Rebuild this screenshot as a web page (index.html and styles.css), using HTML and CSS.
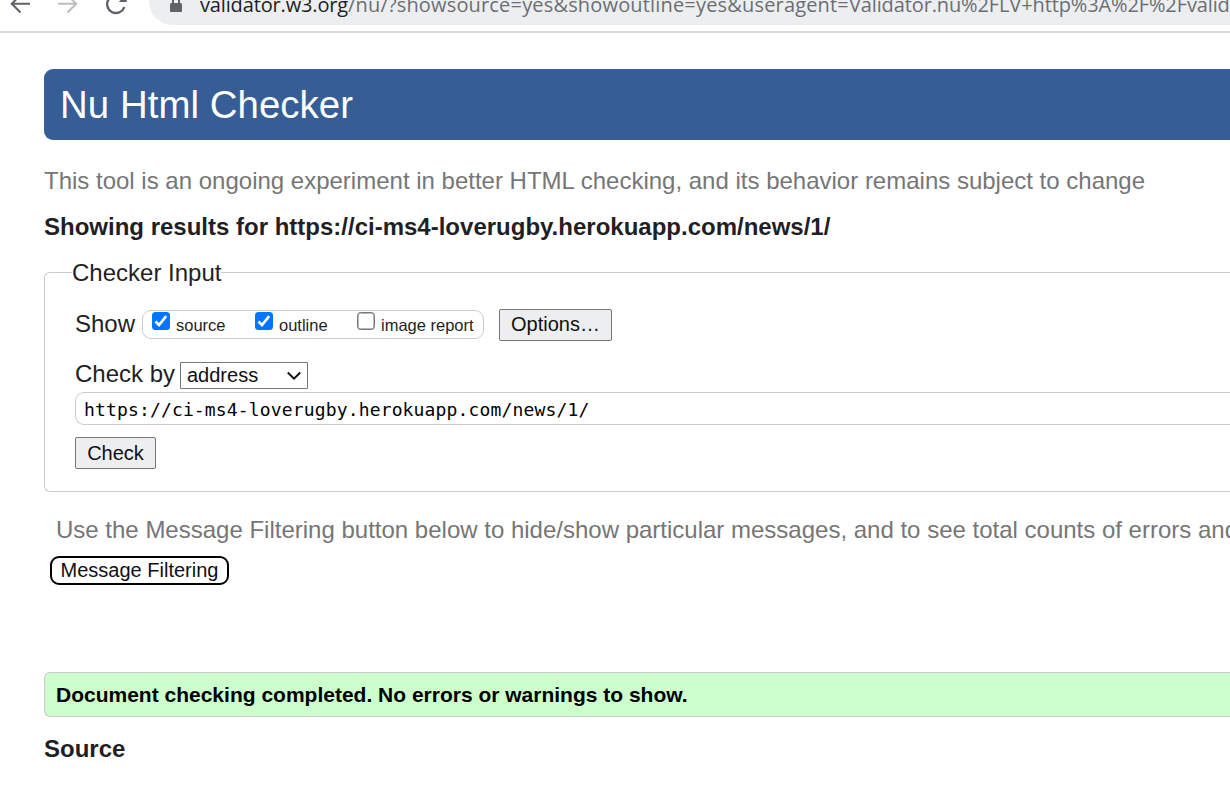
FILE: index.html
```html
<!DOCTYPE html>
<html lang="en">
<head>
<meta charset="utf-8">
<title>Nu Html Checker</title>
<link rel="stylesheet" href="styles.css">
</head>
<body>
<header class="toolbar">
  <svg class="nav" width="140" height="32" viewBox="0 0 140 32" fill="none" stroke-width="2.1">
    <path d="M30 3.700H12M20.500-5l-8.700 8.700 8.700 8.700" stroke="#5f6368"/>
    <path d="M58 3.700h18M67.500-5l8.700 8.700-8.700 8.700" stroke="#bdbfc1"/>
    <path d="M122.500-1.700A8.800 8.800 0 1 0 124.300 7" stroke="#5f6368" stroke-width="2.300"/>
    <path d="M126.700-6V2h-8z" fill="#5f6368"/>
  </svg>
  <div class="omnibox">
    <svg class="lock" width="14" height="20" viewBox="0 0 14 20"><path d="M4 12V8a3 3 0 0 1 6 0v4" fill="none" stroke="#5f6368" stroke-width="2"/><rect x="1" y="11" width="12" height="9.300" rx="1.500" fill="#5f6368"/></svg>
    <span class="url"><span class="host">validator.w3.org</span><span class="path">/nu/?showsource=yes&amp;showoutline=yes&amp;useragent=</span><span class="agent">Validator.nu%2FLV+http%3A%2F%2Fvalid</span></span>
  </div>
</header>
<main class="page">
  <h1 class="title"><span>Nu Html Checker</span></h1>
  <p class="intro"><span>This tool is an ongoing experiment in better HTML checking, and its behavior remains subject to change</span></p>
  <h2 class="results"><span>Showing results for https://ci-ms4-loverugby.herokuapp.com/news/1/</span></h2>
  <form class="panel">
    <div class="legend"><span>Checker Input</span></div>
    <div class="show-row">
      <span class="label show-label">Show</span>
      <div class="checks">
        <span class="box on"><svg width="18" height="18" viewBox="0 0 18 18"><path d="M3.500 9.500l3.500 3.500L14.200 4.200" fill="none" stroke="#fff" stroke-width="2.700"/></svg></span><span class="check-text source">source</span>
        <span class="box on"><svg width="18" height="18" viewBox="0 0 18 18"><path d="M3.500 9.500l3.500 3.500L14.200 4.200" fill="none" stroke="#fff" stroke-width="2.700"/></svg></span><span class="check-text outline">outline</span>
        <span class="box"></span><span class="check-text">image report</span>
      </div>
      <button class="button options" type="button">Options…</button>
    </div>
    <div class="by-row">
      <span class="label by-label">Check by</span>
      <div class="select"><span>address</span><svg width="16" height="10" viewBox="0 0 16 10"><path d="M1.800 1.500L8 7.700l6.200-6.200" fill="none" stroke="#111" stroke-width="2"/></svg></div>
    </div>
    <div class="address">https://ci-ms4-loverugby.herokuapp.com/news/1/</div>
    <button class="button check" type="button">Check</button>
  </form>
  <p class="hint"><span>Use the Message Filtering button below to hide/show particular messages, and to see total counts of errors and</span></p>
  <button class="filter" type="button">Message Filtering</button>
  <p class="success"><span>Document checking completed. No errors or warnings to show.</span></p>
  <h2 class="source-title">Source</h2>
  <div class="listing">1.</div>
</main>
</body>
</html>
```
FILE: styles.css
```css
* { box-sizing: border-box; }
body { margin: 0; height: 796px; overflow: hidden; background: #fff; color: #1f1f25; font-family: "Liberation Sans", Arial, sans-serif; white-space: nowrap; }
h1, h2, p { margin: 0; }
svg { display: block; flex: none; }
button { font-family: inherit; white-space: nowrap; }
.toolbar { height: 33px; border-bottom: 2px solid #d9dadb; display: flex; overflow: hidden; }
.nav { margin-right: 9px; }
.omnibox { flex: none; width: 1081px; height: 47px; margin-top: -22px; border-radius: 24px 0 0 24px; background: #edeef0; display: flex; padding: 14px 0 0 20px; }
.lock { margin-right: 17px; }
.url { margin-top: -1px; font: 20px/28px "Open Sans", "Noto Sans", sans-serif; color: #6b6e73; }
.host { color: #202124; letter-spacing: -.15px; }
.path { letter-spacing: .17px; }
.agent { letter-spacing: -.12px; }
.page { padding: 36px 0 0 44px; }
.title { height: 71px; border-radius: 9px 0 0 9px; background: #365d95; color: #fff; padding-left: 16px; font-size: 38.400px; line-height: 71px; font-weight: 400; letter-spacing: .05px; }
.intro { margin-top: 25px; font-size: 24px; line-height: 32px; color: #767676; }
.results { margin-top: 14px; font-size: 24px; line-height: 32px; }
.panel { margin-top: 29px; height: 220px; border: 1px solid #ccc; border-right: 0; border-radius: 6px 0 0 6px; padding-left: 30px; }
.legend { height: 30px; margin: -16px 0 0 -3px; font-size: 24px; line-height: 32px; }
.legend span { display: inline-block; background: #fff; }
.show-row { display: flex; align-items: center; height: 32px; margin-top: 22px; }
.label { font-size: 24px; line-height: 32px; flex: none; }
.show-label { width: 67px; margin-top: -3px; }
.checks { width: 342px; height: 29px; margin-top: -1px; border: 1px solid #ccc; border-radius: 9px; display: flex; padding: 1px 0 0 9px; }
.box { flex: none; width: 18px; height: 18px; border: 1.500px solid #767676; border-radius: 3.500px; box-shadow: inset 0 0 0 .5px #767676; }
.box.on { border: 0; background: #0075ff; box-shadow: none; }
.check-text { font-size: 16.500px; line-height: 26px; margin-left: 6px; }
.source { width: 79px; }
.outline { width: 78px; }
.button { height: 32px; padding: 0; border: 1px solid #767676; border-radius: 2px; background: #edeef0; color: #101014; font-size: 20px; line-height: 28px; }
.options { width: 113px; margin-left: 15px; padding-bottom: 2px; }
.by-row { display: flex; height: 28px; margin-top: 20px; }
.by-label { width: 105px; line-height: 26px; }
.select { width: 128px; height: 27px; margin-top: 1px; border: 1px solid #767676; border-radius: 1px; display: flex; align-items: center; justify-content: space-between; padding: 0 5px 0 6px; font-size: 20px; color: #101014; }
.address { margin-top: 3px; height: 33px; border: 1px solid #ccc; border-right: 0; border-radius: 9px 0 0 9px; padding-left: 8px; font: 18px/34px "DejaVu Sans Mono", monospace; letter-spacing: .15px; color: #000; }
.check { display: block; width: 81px; margin-top: 12px; }
.hint { margin: 22px 0 0 12px; font-size: 24px; line-height: 32px; color: #767676; }
.filter { display: block; width: 179px; height: 29px; margin: 10px 0 0 6px; padding: 0 0 1px; border: 2px solid #000; border-radius: 9px; background: #fff; color: #101014; font-size: 20px; line-height: 24px; }
.success { height: 45px; margin-top: 87px; border: 1px solid #ccc; border-right: 0; border-radius: 6px 0 0 6px; padding-left: 11px; background: #cfc; color: #000; font-size: 21px; line-height: 44px; font-weight: 700; }
.source-title { margin-top: 16px; font-size: 24px; line-height: 32px; }
.listing { padding-left: 31px; margin-top: 27px; font: 18px/22px "DejaVu Sans Mono", monospace; }
```
